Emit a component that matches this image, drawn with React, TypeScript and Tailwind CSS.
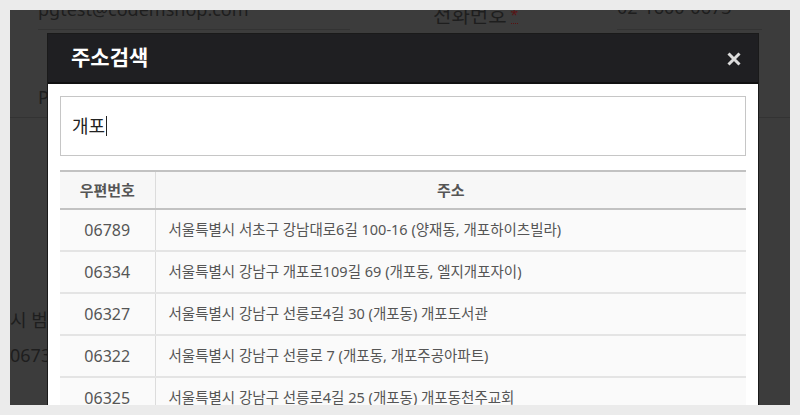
const rows = [
  { zip: "06789", addr: "서울특별시 서초구 강남대로6길 100-16 (양재동, 개포하이츠빌라)" },
  { zip: "06334", addr: "서울특별시 강남구 개포로109길 69 (개포동, 엘지개포자이)" },
  { zip: "06327", addr: "서울특별시 강남구 선릉로4길 30 (개포동) 개포도서관" },
  { zip: "06322", addr: "서울특별시 강남구 선릉로 7 (개포동, 개포주공아파트)" },
  { zip: "06325", addr: "서울특별시 강남구 선릉로4길 25 (개포동) 개포동천주교회" },
]

const font = { fontFamily: '"Noto Sans", "Noto Sans CJK KR", sans-serif' }

const App = () => {
  return (
    <div className="h-[415px] w-[800px] bg-[#ebebeb] p-[10px]" style={font}>
      <div className="relative h-[395px] overflow-hidden bg-[#3c3c3c] text-[#1e1e1e]">
        {/* page behind the dim layer */}
        <div className="flex h-[20px] px-[28px]">
          <div className="w-[312px] border-b border-[#333]">
            <p className="-mt-[15px] text-[18px] leading-[28px]">pgtest@codemshop.com</p>
          </div>
          <div className="ml-[83px] flex w-[100px] items-start">
            <span className="-mt-[8px] text-[20px] leading-[28px]">전화번호</span>
            <span className="-mt-[3px] ml-[4px] border-b border-dotted border-[#5a1010] text-[14px] leading-[16px] text-[#5a1414]">*</span>
          </div>
          <div className="ml-[84px] flex-1 border-b border-[#333]">
            <p className="-mt-[17px] text-[18px] leading-[28px]">02-1600-0673</p>
          </div>
        </div>
        <div className="mt-[56px] flex h-[32px] items-start border-b border-[#333] px-[28px]">
          <span className="-mt-[1px] text-[18px] leading-[24px]">P</span>
        </div>
        <div className="mt-[190px] text-[18px] leading-[24px]">시 범일</div>
        <div className="mt-[11px] text-[18px] leading-[24px]">0673</div>

        {/* modal */}
        <div className="absolute left-[38px] top-[24px] w-[710px] bg-white shadow-[0_0_0_1px_#1a1a1a]">
          <div className="flex h-[50px] items-center justify-between border-b-2 border-[#111] bg-[#1f1f22] pl-[23px] pr-[16px]">
            <h2 className="text-[21px] font-bold text-white">주소검색</h2>
            <svg width="16" height="16" viewBox="0 0 16 16" className="mt-[2px]">
              <path d="M2.5 2.5 L13.5 13.5 M13.5 2.5 L2.5 13.5" stroke="#dcdcdc" strokeWidth="3" />
            </svg>
          </div>
          <div className="px-[12px] pt-[12px]">
            <div className="flex h-[60px] items-center border border-[#c6c6c6] px-[11px]">
              <span className="text-[18px] text-[#222]">개포</span>
              <span className="ml-px h-[20px] w-px bg-[#222]" />
            </div>
            <table className="mt-[14px] w-full border-collapse text-[14.5px] text-[#555]">
              <thead>
                <tr className="h-[38px] border-y-2 border-[#c2c2c2] bg-[#f7f7f7]">
                  <th className="w-[95px] border-r border-[#dcdcdc] text-[15px] font-bold text-[#555]">우편번호</th>
                  <th className="text-[15px] font-bold text-[#555]">주소</th>
                </tr>
              </thead>
              <tbody>
                {rows.map((r) => (
                  <tr key={r.zip} className="h-[42px] border-b-2 border-[#e4e4e4] bg-[#fafafa]">
                    <td className="border-r border-[#dcdcdc] text-center text-[16px]">{r.zip}</td>
                    <td className="pl-[13px]">{r.addr}</td>
                  </tr>
                ))}
              </tbody>
            </table>
          </div>
        </div>
      </div>
    </div>
  )
}

export default App
